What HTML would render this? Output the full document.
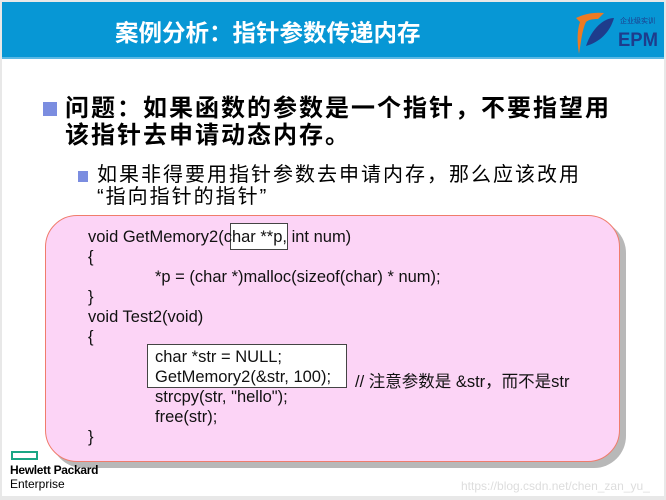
<!DOCTYPE html>
<html><head><meta charset="utf-8"><style>
*{margin:0;padding:0}
body{width:666px;height:500px;background:#e8e8e8;position:relative;overflow:hidden;font-family:"Liberation Sans","Noto Sans CJK SC",sans-serif}
#pg{position:absolute;left:2px;top:2px;width:662px;height:494px;background:#fff}
#hd{position:absolute;left:0;top:0;width:662px;height:55px;background:#0797d5;border-bottom:2px solid #5ab8e4}
#tt{position:absolute;left:113px;top:12px;color:#fff;font-weight:bold;font-size:23.5px;white-space:nowrap}
.t{position:absolute;white-space:nowrap;color:#000}
.sq{position:absolute;background:#7b8de0}
#box{position:absolute;left:43px;top:213px;width:573px;height:245px;background:#fcd4f6;border:1px solid #f07c6c;border-radius:32px;box-shadow:6px 6px 0 #b8b8b8}
.c{position:absolute;font-size:16.5px;white-space:nowrap;color:#111}
.bx{position:absolute;border:1px solid #444;background:#fff}
</style></head><body>
<div id="pg">
<div id="hd">
<div id="tt">案例分析：指针参数传递内存</div>
<svg style="position:absolute;left:560px;top:4px" width="100" height="50" viewBox="0 0 100 50">
<path d="M14 12 C22 8 32 6 42 7 L36 13 C30 13 26 14 24 16 C20 24 19 36 17 48 C15 36 15 24 18 16 L14 12Z" fill="#ee7a22"/>
<path d="M24 40 C30 22 42 12 52 12 C48 26 38 36 24 40Z" fill="#1e3c8c"/>
<text x="58" y="17" font-size="7" fill="#1e3c8c" font-family="Noto Sans CJK SC,sans-serif">企业级实训</text>
<text x="56" y="40" font-size="19" font-weight="bold" fill="#1e3c8c" font-family="Liberation Sans,sans-serif" textLength="40" lengthAdjust="spacingAndGlyphs">EPM</text>
</svg>
</div>
<div class="sq" style="left:41px;top:100px;width:14px;height:14px"></div>
<div class="t" style="left:63px;top:93px;font-size:24px;font-weight:bold;letter-spacing:2px;line-height:27px">问题：如果函数的参数是一个指针，不要指望用<br>该指针去申请动态内存。</div>
<div class="sq" style="left:76px;top:169px;width:10px;height:11px"></div>
<div class="t" style="left:95px;top:162px;font-size:20px;letter-spacing:2px;line-height:22px">如果非得要用指针参数去申请内存，那么应该改用<br>“指向指针的指针”</div>
<div id="box"></div>
<div class="bx" style="left:228px;top:221px;width:56px;height:25px"></div>
<div class="bx" style="left:145px;top:342px;width:198px;height:42px"></div>
<div class="c" style="left:86px;top:226px">void GetMemory2(char **p, int num)</div>
<div class="c" style="left:86px;top:246px">{</div>
<div class="c" style="left:153px;top:266px">*p = (char *)malloc(sizeof(char) * num);</div>
<div class="c" style="left:86px;top:286px">}</div>
<div class="c" style="left:86px;top:306px">void Test2(void)</div>
<div class="c" style="left:86px;top:326px">{</div>
<div class="c" style="left:153px;top:346px">char *str = NULL;</div>
<div class="c" style="left:153px;top:366px">GetMemory2(&amp;str, 100);</div>
<div class="c" style="left:353px;top:366px">// 注意参数是 &amp;str，而不是str</div>
<div class="c" style="left:153px;top:386px">strcpy(str, "hello");</div>
<div class="c" style="left:153px;top:406px">free(str);</div>
<div class="c" style="left:86px;top:426px">}</div>
<div style="position:absolute;left:9px;top:449px;width:23px;height:5px;border:2px solid #1aa684"></div>
<div class="t" style="left:8px;top:461px;font-size:12px;font-weight:bold;letter-spacing:-0.3px">Hewlett Packard</div>
<div class="t" style="left:8px;top:475px;font-size:12px">Enterprise</div>
<div class="t" style="left:459px;top:477px;font-size:12px;color:#ddd">https://blog.csdn.net/chen_zan_yu_</div>
</div>
</body></html>
